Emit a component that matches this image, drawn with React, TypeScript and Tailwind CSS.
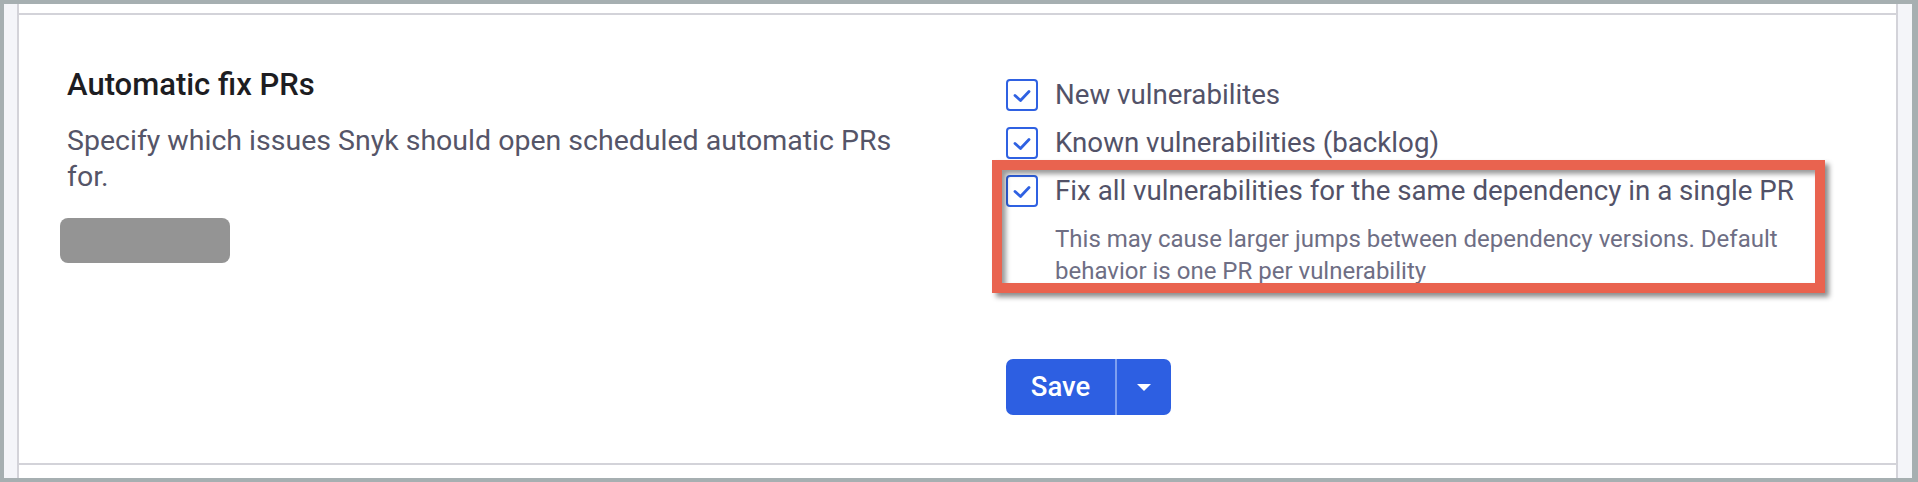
import React from "react"

const options = [
  { label: "New vulnerabilites" },
  { label: "Known vulnerabilities (backlog)" },
]

function CheckBox() {
  return (
    <div className="flex h-[32px] w-[32px] shrink-0 items-center justify-center rounded-[4px] border-2 border-[#2f61e2] bg-white">
      <svg width="28" height="28" viewBox="0 0 28 28" fill="none">
        <path d="M7 14.5 L12.5 19.5 L21 10.5" stroke="#2f61e2" strokeWidth="2.8" strokeLinecap="round" strokeLinejoin="round" />
      </svg>
    </div>
  )
}

export default function App() {
  return (
    <div
      className="flex h-[482px] w-[1918px] bg-[#a6afb1] p-[4px]"
      style={{ fontFamily: "Roboto, 'Noto Sans', sans-serif" }}
    >
      {/* left page gutter */}
      <div className="w-[13px] shrink-0 bg-[#f4f5f9]" />
      <div className="flex w-[1881px] shrink-0 flex-col border-x-2 border-[#d3d3d9] bg-white">
        <div className="h-[9px] shrink-0" />
        <div className="flex h-[452px] shrink-0 border-y-2 border-[#d3d3d9]">
          {/* section description */}
          <div className="ml-[48px] w-[939px] shrink-0 pt-[52px]">
            <h2 className="text-[31px] font-medium leading-[36px] text-[#1d1d22]">Automatic fix PRs</h2>
            <p className="mt-[20px] w-[860px] text-[28.5px] leading-[36px] text-[#555568]">
              Specify which issues Snyk should open scheduled automatic PRs for.
            </p>
            <div className="mt-[23px] h-[45px] w-[170px] -translate-x-[7px] rounded-[8px] bg-[#949494]" />
          </div>

          {/* options */}
          <div className="flex flex-col pt-[64px]">
            <div className="flex flex-col gap-[16px]">
              {options.map((o) => (
                <div key={o.label} className="flex items-center gap-[17px]">
                  <CheckBox />
                  <span className="text-[27.7px] leading-[32px] text-[#525268]">{o.label}</span>
                </div>
              ))}
              <div className="relative">
                <div className="flex items-center gap-[17px]">
                  <CheckBox />
                  <span className="text-[27.7px] leading-[32px] text-[#525268]">
                    Fix all vulnerabilities for the same dependency in a single PR
                  </span>
                </div>
                <p className="ml-[49px] mt-[16px] w-[760px] text-[24px] leading-[32px] text-[#6e6e84]">
                  This may cause larger jumps between dependency versions. Default behavior is one PR per vulnerability
                </p>
                {/* annotation box */}
                <div className="absolute left-[-14px] top-[-15px] h-[133px] w-[833px] border-[10px] border-[#e9634f] shadow-[4px_4px_5px_rgba(0,0,0,0.45),inset_4px_4px_5px_rgba(0,0,0,0.4)]" />
              </div>
            </div>

            <div className="mt-[72px] flex h-[56px] w-[165px] overflow-hidden rounded-[7px] bg-[#2d5fe2] text-white">
              <button className="flex w-[109px] items-center justify-center text-[27.5px] font-medium">Save</button>
              <div className="w-[2px] bg-[#7e9ff0]" />
              <button className="flex flex-1 items-center justify-center">
                <svg width="14" height="7" viewBox="0 0 14 7">
                  <path d="M0 0 L14 0 L7 7 Z" fill="white" />
                </svg>
              </button>
            </div>
          </div>
        </div>
        <div className="h-[13px] shrink-0" />
      </div>
      {/* right page gutter */}
      <div className="w-[14px] shrink-0 bg-[#f4f5f9]" />
    </div>
  )
}
